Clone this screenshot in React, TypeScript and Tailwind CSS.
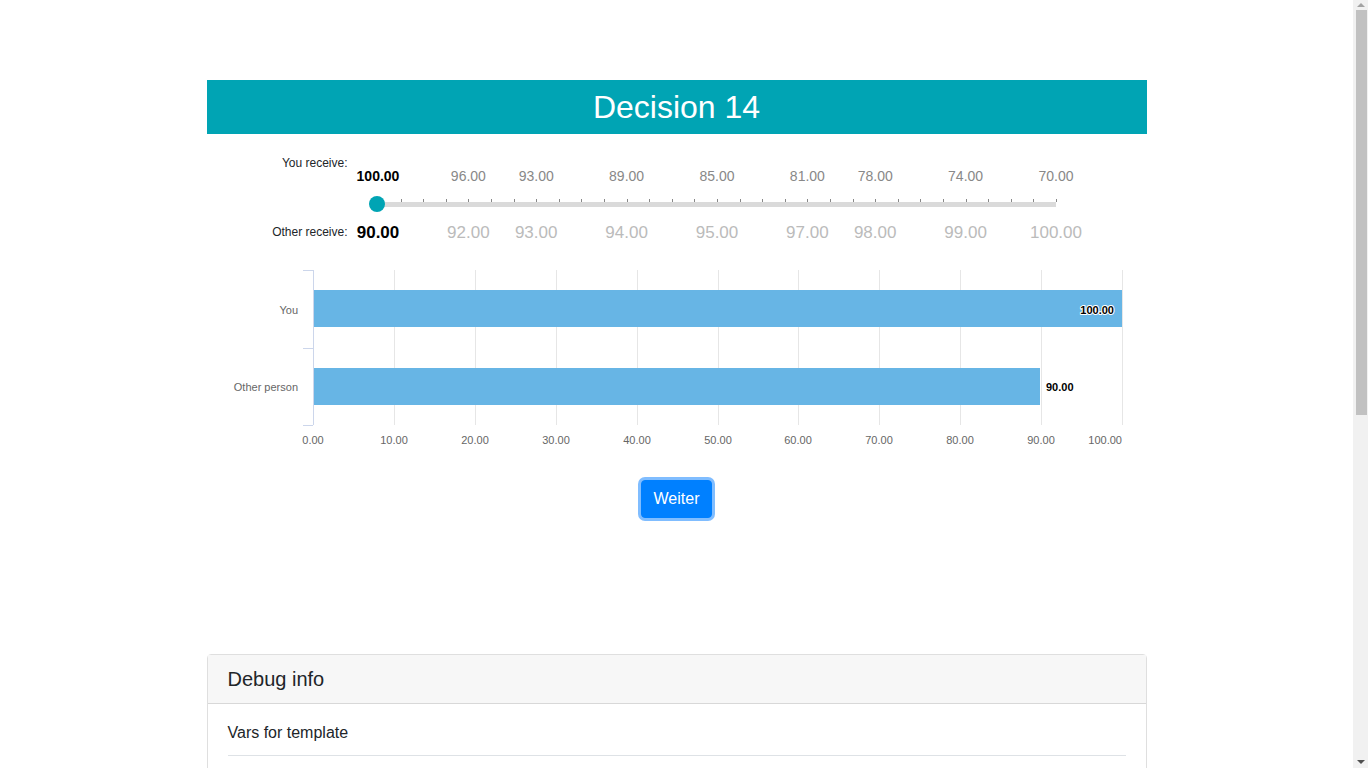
import React from "react";

const topVals = [
  { i: 0, v: "100.00", bold: true },
  { i: 4, v: "96.00" },
  { i: 7, v: "93.00" },
  { i: 11, v: "89.00" },
  { i: 15, v: "85.00" },
  { i: 19, v: "81.00" },
  { i: 22, v: "78.00" },
  { i: 26, v: "74.00" },
  { i: 30, v: "70.00" },
];
const botVals = [
  { i: 0, v: "90.00", bold: true },
  { i: 4, v: "92.00" },
  { i: 7, v: "93.00" },
  { i: 11, v: "94.00" },
  { i: 15, v: "95.00" },
  { i: 19, v: "97.00" },
  { i: 22, v: "98.00" },
  { i: 26, v: "99.00" },
  { i: 30, v: "100.00" },
];
const STEP = 22.6;
const X0 = 30.5;

function Slider() {
  return (
    <div className="flex h-[100px] mt-[14px]">
      <div className="w-[141px] flex flex-col items-end text-[12px] leading-[14px] text-[#212529]">
        <div className="mt-[8px]">You receive:</div>
        <div className="mt-[55px]">Other receive:</div>
      </div>
      <div className="relative flex-1">
        {topVals.map((t) => (
          <div
            key={"t" + t.i}
            className={
              "absolute top-[20px] -translate-x-1/2 text-[14px] leading-4 whitespace-nowrap " +
              (t.bold ? "font-bold text-black" : "text-[#888888]")
            }
            style={{ left: X0 + STEP * t.i }}
          >
            {t.v}
          </div>
        ))}
        <div className="absolute left-[29px] top-[54px] h-[5px] w-[679px] bg-[#dadada]" />
        {Array.from({ length: 30 }).map((_, k) => (
          <div
            key={"k" + k}
            className="absolute top-[51px] h-[3px] w-px bg-[#888888]"
            style={{ left: Math.round(30 + STEP * (k + 1)) }}
          />
        ))}
        <div className="absolute left-[21px] top-[48px] h-4 w-4 rounded-full bg-[#00a4b4]" />
        {botVals.map((t) => (
          <div
            key={"b" + t.i}
            className={
              "absolute top-[75px] -translate-x-1/2 text-[17px] leading-5 whitespace-nowrap " +
              (t.bold ? "font-bold text-black" : "text-[#bbbbbb]")
            }
            style={{ left: X0 + STEP * t.i }}
          >
            {t.v}
          </div>
        ))}
      </div>
    </div>
  );
}

function Chart() {
  const grid = Array.from({ length: 11 }).map((_, i) => 106 + 80.9 * i);
  return (
    <svg width="940" height="190" className="block mt-[14px]" style={{ fontFamily: "'Liberation Sans', Arial, sans-serif" }}>
      {grid.map((x, i) => (
        <line key={i} x1={Math.round(x) + 0.5} x2={Math.round(x) + 0.5} y1={8} y2={163} stroke="#e6e6e6" strokeWidth={1} />
      ))}
      <rect x={106} y={28} width={809} height={37} fill="#67b5e5" />
      <rect x={106} y={106} width={727} height={37} fill="#67b5e5" />
      <line x1={106.5} x2={106.5} y1={8} y2={163} stroke="#ccd6eb" strokeWidth={1} />
      <line x1={96} x2={106} y1={8.5} y2={8.5} stroke="#ccd6eb" strokeWidth={1} />
      <line x1={96} x2={106} y1={86.5} y2={86.5} stroke="#ccd6eb" strokeWidth={1} />
      <line x1={96} x2={106} y1={163.5} y2={163.5} stroke="#ccd6eb" strokeWidth={1} />
      <text x={91} y={52} textAnchor="end" fontSize={11} fill="#666666">You</text>
      <text x={91} y={129} textAnchor="end" fontSize={11} fill="#666666">Other person</text>
      {grid.map((x, i) => (
        <text
          key={"l" + i}
          x={i === 10 ? 915 : Math.round(x)}
          y={182}
          textAnchor={i === 10 ? "end" : "middle"}
          fontSize={11}
          fill="#666666"
        >
          {(i * 10).toFixed(2)}
        </text>
      ))}
      <text x={907} y={52} textAnchor="end" fontSize={11} fontWeight="bold" fill="#000" stroke="#fff" strokeWidth={2} strokeLinejoin="round" style={{ paintOrder: "stroke" }}>
        100.00
      </text>
      <text x={839} y={129} fontSize={11} fontWeight="bold" fill="#000" stroke="#fff" strokeWidth={2} strokeLinejoin="round" style={{ paintOrder: "stroke" }}>
        90.00
      </text>
    </svg>
  );
}

function FakeScrollbar() {
  return (
    <div className="fixed right-0 top-0 w-[15px] h-screen bg-[#f1f1f1] flex flex-col items-center">
      <div className="h-[10px] flex items-center justify-center">
        <div className="w-0 h-0 border-l-[4px] border-r-[4px] border-b-[4px] border-l-transparent border-r-transparent border-b-[#a3a3a3]" />
      </div>
      <div className="w-[11px] h-[405px] bg-[#c1c1c1] ml-[1px]" />
      <div className="flex-1" />
      <div className="h-[12px] flex items-center justify-center">
        <div className="w-0 h-0 border-l-[4px] border-r-[4px] border-t-[4px] border-l-transparent border-r-transparent border-t-[#505050]" />
      </div>
    </div>
  );
}

export default function App() {
  return (
    <div className="bg-white text-[#212529] font-['Liberation_Sans',Arial,sans-serif] text-[16px] leading-6 pr-[15px] h-screen overflow-hidden">
      <div className="w-[940px] mx-auto pt-20">
        <div className="h-[54px] bg-[#00a4b4] flex items-center justify-center text-white text-[32px] leading-[38px]">
          Decision 14
        </div>
        <Slider />
        <Chart />
        <div className="flex justify-center mt-[28px]">
          <button className="h-[38px] px-3 rounded bg-[#0080ff] text-white text-[16px] leading-6 border border-[#0080ff] shadow-[0_0_0_3px_#80bdff]">
            Weiter
          </button>
        </div>
        <div className="mt-[136px] border border-[rgba(0,0,0,0.125)] rounded">
          <div className="bg-[#f7f7f7] px-5 py-3 border-b border-[rgba(0,0,0,0.125)] text-[20px] leading-6">
            Debug info
          </div>
          <div className="px-5 pt-[17px] pb-5 h-[200px]">
            <div className="text-[16px] leading-6">Vars for template</div>
            <div className="mt-[10px] border-t border-[#dee2e6]" />
          </div>
        </div>
      </div>
      <FakeScrollbar />
    </div>
  );
}
